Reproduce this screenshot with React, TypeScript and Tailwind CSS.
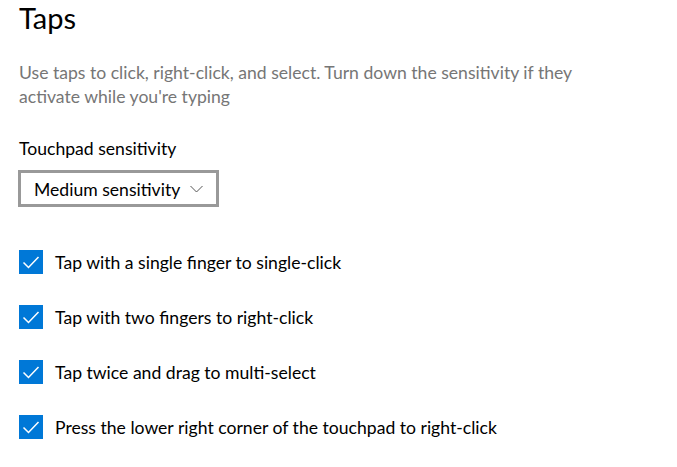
import React from "react";

const font = { fontFamily: 'Lato, "Noto Sans", sans-serif' };

function Check({ label }: { label: string }) {
  return (
    <div className="flex items-center h-[24px] gap-[12px]">
      <div className="w-[24px] h-[24px] bg-[#0078d7] flex items-center justify-center shrink-0">
        <svg width="24" height="24" viewBox="0 0 24 24" fill="none">
          <polyline points="4.5,12.5 9.5,17.5 19.5,7" stroke="#ffffff" strokeWidth="1.5" />
        </svg>
      </div>
      <span className="pt-[2px] text-[17.6px] text-black leading-[24px] whitespace-nowrap">{label}</span>
    </div>
  );
}

export default function App() {
  return (
    <div className="w-[677px] h-[467px] bg-white pl-[19px] overflow-hidden" style={font}>
      <div className="text-[29px] leading-[36px] text-black">Taps</div>
      <div className="mt-[25px] text-[17.6px] leading-[24px] text-[#767676] whitespace-nowrap">
        Use taps to click, right-click, and select. Turn down the sensitivity if they
        <br />
        activate while you're typing
      </div>
      <div className="mt-[28px] text-[17.6px] leading-[24px] text-black">Touchpad sensitivity</div>
      <div className="mt-[9px] ml-[-1px] w-[201px] h-[37px] border-[3px] border-[#999999] flex items-center pl-[13px] pr-[13px]">
        <span className="pt-[2px] text-[17.6px] text-black leading-[24px] whitespace-nowrap">Medium sensitivity</span>
        <svg className="ml-auto" width="13" height="8" viewBox="0 0 13 8" fill="none">
          <polyline points="0.5,1 6.5,7 12.5,1" stroke="#555555" strokeWidth="1" />
        </svg>
      </div>
      <div className="mt-[43px] flex flex-col gap-[31px]">
        <Check label="Tap with a single finger to single-click" />
        <Check label="Tap with two fingers to right-click" />
        <Check label="Tap twice and drag to multi-select" />
        <Check label="Press the lower right corner of the touchpad to right-click" />
      </div>
    </div>
  );
}
